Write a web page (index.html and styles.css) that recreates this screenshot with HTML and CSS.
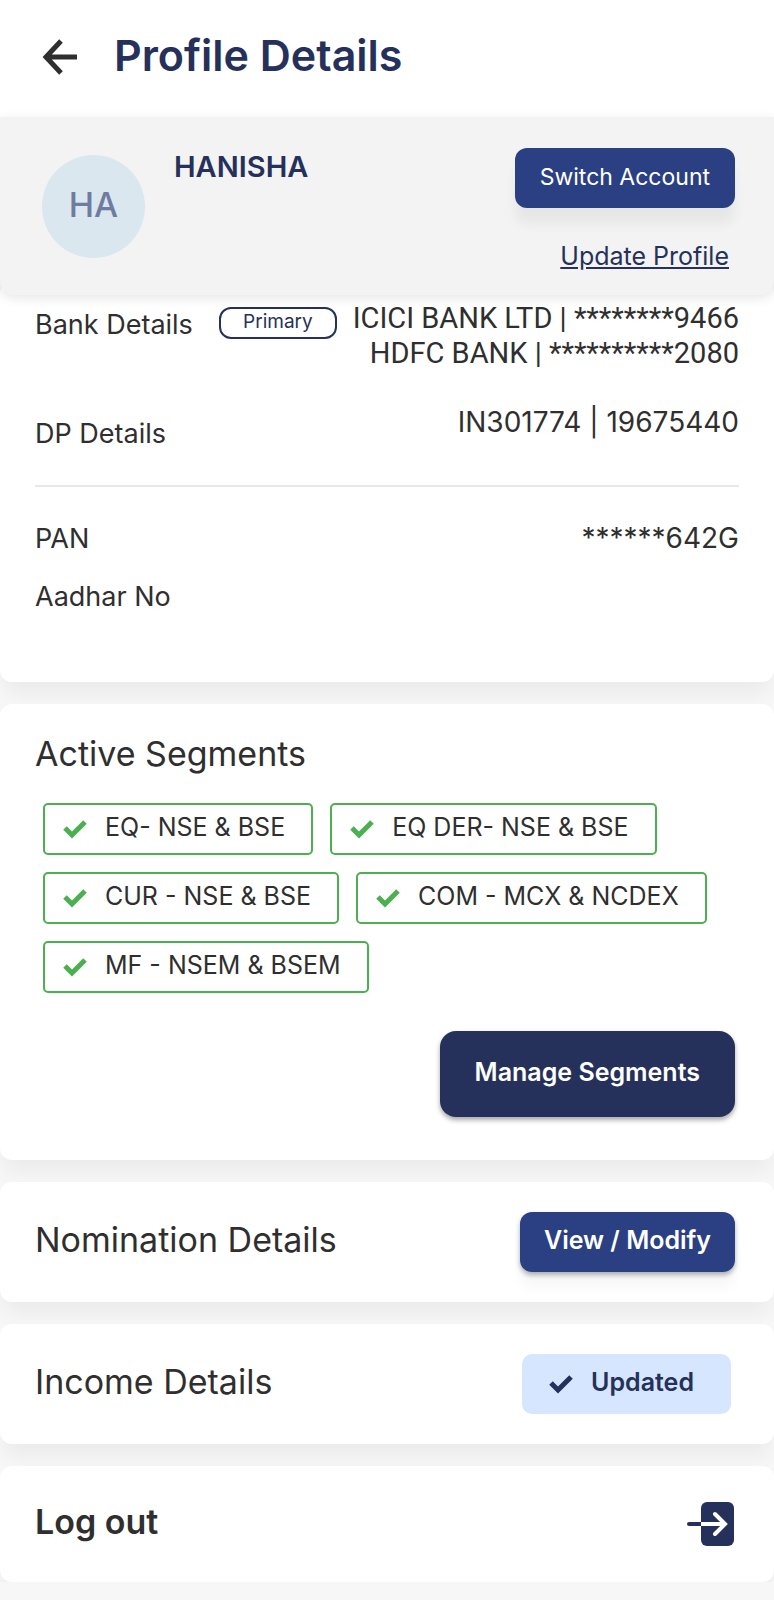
FILE: index.html
```html
<!DOCTYPE html>
<html lang="en">
<head>
  <meta charset="UTF-8" />
  <meta name="viewport" content="width=device-width, initial-scale=1.0"/>
  <title>Profile Details</title>
  <link rel="stylesheet" href="styles.css">
</head>
<body>
  <svg class="sprite" aria-hidden="true">
    <symbol id="check" viewBox="0 0 24 20">
      <path d="M2 9L9 16L22 3" fill="none" stroke="currentColor" stroke-width="5"/>
    </symbol>
  </svg>

  <header class="topbar">
    <button class="back" aria-label="Back">
      <svg width="36" height="36" viewBox="0 0 36 36" fill="none" stroke="#2f2f2f" stroke-width="5">
        <path d="M19 2L4 18L19 34M4 18H35"/>
      </svg>
    </button>
    <h1>Profile Details</h1>
  </header>

  <section class="profile">
    <div class="avatar">HA</div>
    <div class="name">HANISHA</div>
    <div class="profile-actions">
      <button class="btn btn-switch">Switch Account</button>
      <a href="#" class="update">Update Profile</a>
    </div>
  </section>

  <main>
    <section class="card bank">
      <div class="row">
        <div class="bank-label">
          <span class="label">Bank Details</span>
          <span class="pill">Primary</span>
        </div>
        <div class="value accounts">ICICI BANK LTD | ********9466<br>HDFC BANK | **********2080</div>
      </div>
      <div class="row dp">
        <span class="label">DP Details</span>
        <span class="value">IN301774 | 19675440</span>
      </div>
      <hr>
      <div class="row">
        <span class="label">PAN</span>
        <span class="value">******642G</span>
      </div>
      <div class="row aadhar">
        <span class="label">Aadhar No</span>
      </div>
    </section>

    <section class="card segments">
      <h2>Active Segments</h2>
      <ul class="chips">
        <li><svg class="check"><use href="#check"/></svg>EQ- NSE &amp; BSE</li>
        <li><svg class="check"><use href="#check"/></svg>EQ DER- NSE &amp; BSE</li>
        <li><svg class="check"><use href="#check"/></svg>CUR - NSE &amp; BSE</li>
        <li><svg class="check"><use href="#check"/></svg>COM - MCX &amp; NCDEX</li>
        <li><svg class="check"><use href="#check"/></svg>MF - NSEM &amp; BSEM</li>
      </ul>
      <button class="btn btn-manage">Manage Segments</button>
    </section>

    <section class="card line">
      <h2>Nomination Details</h2>
      <button class="btn btn-view">View / Modify</button>
    </section>

    <section class="card line">
      <h2>Income Details</h2>
      <div class="updated"><svg class="check"><use href="#check"/></svg>Updated</div>
    </section>

    <section class="card line logout">
      <h2>Log out</h2>
      <button class="logout-btn" aria-label="Log out">
        <svg width="48" height="44" viewBox="0 0 48 44" fill="none" stroke-width="4">
          <rect x="14" y="0" width="33" height="44" rx="6" fill="#25315b"/>
          <path d="M2 22H14" stroke="#25315b" stroke-linecap="round"/>
          <path d="M14 22H38" stroke="#fff"/>
          <path d="M28 12L38 22L28 32" stroke="#fff" stroke-linecap="round"/>
        </svg>
      </button>
    </section>
  </main>
</body>
</html>
```

FILE: styles.css
```css
* {
  box-sizing: border-box;
}
body {
  font-family: Inter, Roboto, sans-serif;
  background: #f7f7f7;
  color: #2f2f2f;
  margin: 0;
}
h1, h2, ul {
  margin: 0;
  padding: 0;
}
button {
  font-family: inherit;
  border: none;
  cursor: pointer;
}
.sprite {
  display: none;
}
.topbar {
  display: flex;
  align-items: center;
  gap: 36px;
  height: 117px;
  padding: 0 42px 4px;
  background: #fff;
}
.back {
  display: flex;
  padding: 0;
  background: none;
}
h1 {
  padding-bottom: 4px;
  font-size: 43px;
  line-height: 50px;
  font-weight: 600;
  color: #25315b;
}
.profile {
  position: relative;
  z-index: 1;
  display: flex;
  height: 178px;
  padding: 31px 39px 0 42px;
  background: #f3f3f3;
  border-radius: 0 0 14px 14px;
  box-shadow: 0 3px 12px rgba(0, 0, 0, 0.1);
}
.avatar {
  width: 103px;
  height: 103px;
  margin-top: 7px;
  border-radius: 50%;
  background: #dae7ef;
  color: #6f7ba0;
  font-size: 34px;
  font-weight: 500;
  line-height: 100px;
  text-align: center;
}
.name {
  flex: 1;
  margin-left: 29px;
  font-size: 29px;
  line-height: 38px;
  font-weight: 600;
  color: #25315b;
}
.profile-actions {
  display: flex;
  flex-direction: column;
  align-items: flex-end;
}
.btn {
  height: 60px;
  padding: 0 24px 4px;
  border-radius: 12px;
  background: #2a4082;
  color: #fff;
  font-size: 25px;
  font-weight: 600;
  white-space: nowrap;
}
.btn-switch {
  padding: 0 25px 2px;
  font-size: 23px;
  font-weight: 400;
  box-shadow: 0 16px 12px rgba(0, 0, 0, 0.05);
}
.update {
  margin: 33px 6px 0 0;
  font-size: 25px;
  line-height: 30px;
  color: #25315b;
}
.card {
  margin-bottom: 22px;
  padding: 30px 35px;
  background: #fff;
  border-radius: 12px;
  box-shadow: 0 16px 20px -4px rgba(0, 0, 0, 0.05);
}
.bank {
  margin-top: -12px;
  padding: 18px 35px 68px;
}
.row {
  display: flex;
  justify-content: space-between;
  align-items: flex-start;
}
.label {
  font-size: 27px;
  line-height: 35px;
}
.value {
  font-size: 28px;
  line-height: 35px;
  text-align: right;
  white-space: nowrap;
}
.accounts {
  font-family: Roboto, sans-serif;
  font-size: 29px;
}
.bank-label {
  display: flex;
  gap: 26px;
  padding-top: 6px;
  white-space: nowrap;
}
.pill {
  width: 118px;
  height: 32px;
  border: 2px solid #25315b;
  border-radius: 12px;
  color: #25315b;
  font-size: 19px;
  line-height: 26px;
  text-align: center;
}
.dp {
  height: 46px;
  margin-top: 34px;
}
.dp .label {
  align-self: flex-end;
}
hr {
  height: 2px;
  margin: 34px 0;
  border: none;
  background: #e9e9e9;
}
.aadhar {
  margin-top: 23px;
}
h2 {
  padding-bottom: 4px;
  font-size: 34px;
  line-height: 40px;
  font-weight: 400;
}
.segments {
  display: flex;
  flex-direction: column;
  padding-right: 39px;
  padding-bottom: 43px;
}
.chips {
  display: flex;
  flex-wrap: wrap;
  gap: 17px;
  margin: 25px 0 38px 8px;
  list-style: none;
}
.chips li {
  display: flex;
  align-items: center;
  height: 52px;
  padding: 0 26px 4px 18px;
  border: 2px solid #4caf50;
  border-radius: 5px;
  font-size: 25px;
  white-space: nowrap;
}
.check {
  width: 24px;
  height: 20px;
  margin: 4px 18px 0 0;
}
.chips .check {
  color: #4caf50;
}
.btn-manage {
  align-self: flex-end;
  height: 86px;
  padding: 0 35px 4px;
  border-radius: 16px;
  background: #25315b;
  box-shadow: 0 3px 5px rgba(0, 0, 0, 0.35);
}
.btn-view {
  box-shadow: 0 3px 5px rgba(0, 0, 0, 0.3), 0 16px 12px rgba(0, 0, 0, 0.03);
}
.line {
  display: flex;
  justify-content: space-between;
  align-items: center;
  padding-right: 39px;
}
.updated {
  display: flex;
  align-items: center;
  height: 60px;
  margin-right: 4px;
  padding: 0 37px 4px 27px;
  border-radius: 10px;
  background: #d6e6fe;
  color: #25315b;
  font-size: 25px;
  font-weight: 600;
}
.logout {
  padding-top: 36px;
  padding-bottom: 36px;
  margin-bottom: 0;
}
.logout h2 {
  font-weight: 600;
}
.logout-btn {
  display: flex;
  padding: 0;
  background: none;
}
```
